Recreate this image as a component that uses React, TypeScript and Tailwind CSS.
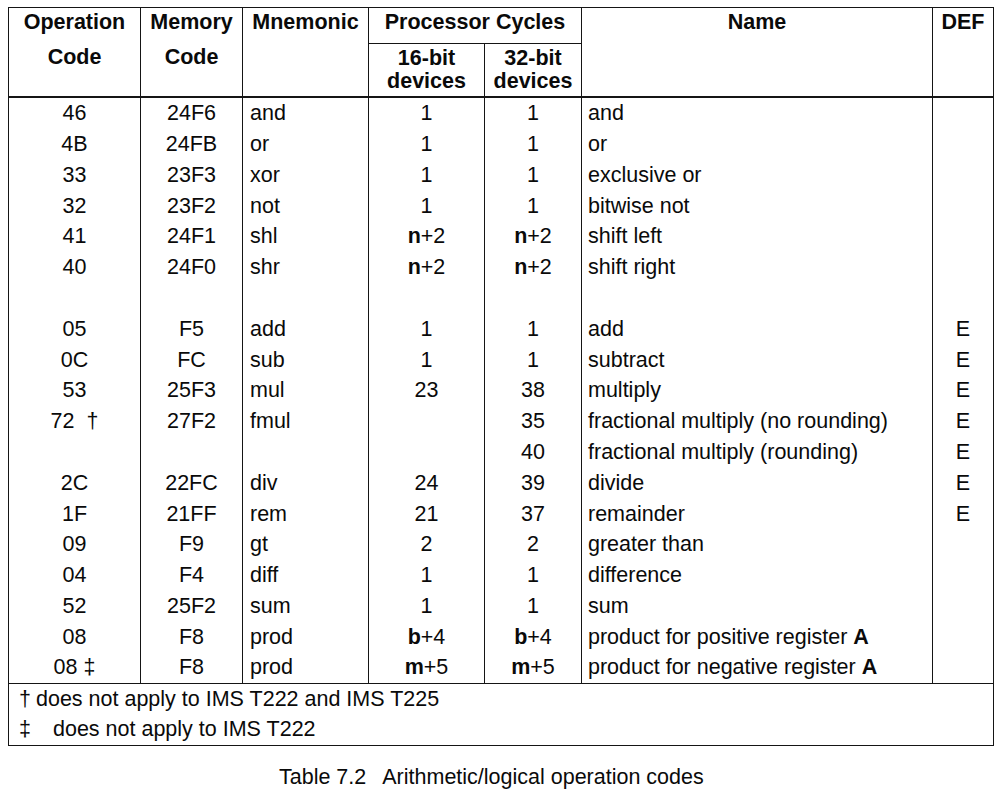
import React from "react";

type Cell = React.ReactNode;

const b = (l: string, rest: string) => (
  <span>
    <b className="font-bold">{l}</b>
    {rest}
  </span>
);

const rows: Cell[][] = [
  ["46", "24F6", "and", "1", "1", "and", ""],
  ["4B", "24FB", "or", "1", "1", "or", ""],
  ["33", "23F3", "xor", "1", "1", "exclusive or", ""],
  ["32", "23F2", "not", "1", "1", "bitwise not", ""],
  ["41", "24F1", "shl", b("n", "+2"), b("n", "+2"), "shift left", ""],
  ["40", "24F0", "shr", b("n", "+2"), b("n", "+2"), "shift right", ""],
  ["", "", "", "", "", "", ""],
  ["05", "F5", "add", "1", "1", "add", "E"],
  ["0C", "FC", "sub", "1", "1", "subtract", "E"],
  ["53", "25F3", "mul", "23", "38", "multiply", "E"],
  ["72\u00a0\u00a0\u2020", "27F2", "fmul", "", "35", "fractional multiply (no rounding)", "E"],
  ["", "", "", "", "40", "fractional multiply (rounding)", "E"],
  ["2C", "22FC", "div", "24", "39", "divide", "E"],
  ["1F", "21FF", "rem", "21", "37", "remainder", "E"],
  ["09", "F9", "gt", "2", "2", "greater than", ""],
  ["04", "F4", "diff", "1", "1", "difference", ""],
  ["52", "25F2", "sum", "1", "1", "sum", ""],
  ["08", "F8", "prod", b("b", "+4"), b("b", "+4"), (
    <span>
      product for positive register <b className="font-bold">A</b>
    </span>
  ), ""],
  ["08 \u2021", "F8", "prod", b("m", "+5"), b("m", "+5"), (
    <span>
      product for negative register <b className="font-bold">A</b>
    </span>
  ), ""],
];

const align = [
  "justify-center",
  "justify-center",
  "justify-start pl-[7px]",
  "justify-center",
  "justify-center",
  "justify-start pl-[6px]",
  "justify-center",
];

export default function App() {
  return (
    <div
      className="w-[1000px] h-[802px] bg-white text-[#0a0a0a] text-[21.5px] overflow-hidden"
      style={{ fontFamily: '"Liberation Sans", Arial, sans-serif' }}
    >
      <div className="pt-[7px] pl-[8px]">
        <div className="w-[986px] border border-[#151515]">
          {/* header */}
          <div className="grid grid-cols-[132px_102px_126px_116px_97px_351px_60px] grid-rows-[36px_52px] border-b-2 border-[#151515] font-bold">
            <div className="row-span-2 border-r border-[#151515] text-center">
              <div className="leading-[28px]">Operation</div>
              <div className="leading-[28px] mt-[7px]">Code</div>
            </div>
            <div className="row-span-2 border-r border-[#151515] text-center">
              <div className="leading-[28px]">Memory</div>
              <div className="leading-[28px] mt-[7px]">Code</div>
            </div>
            <div className="row-span-2 border-r border-[#151515] text-center">
              <div className="leading-[28px]">Mnemonic</div>
            </div>
            <div className="col-span-2 border-r border-b border-[#151515] text-center leading-[28px]">
              Processor Cycles
            </div>
            <div className="row-span-2 border-r border-[#151515] text-center leading-[28px]">Name</div>
            <div className="row-span-2 text-center leading-[28px]">DEF</div>
            <div className="border-r border-[#151515] text-center pt-[3px] leading-[23px]">
              16-bit
              <br />
              devices
            </div>
            <div className="border-r border-[#151515] text-center pt-[3px] leading-[23px]">
              32-bit
              <br />
              devices
            </div>
          </div>
          {/* body */}
          <div className="grid grid-cols-[132px_102px_126px_116px_97px_351px_60px] grid-rows-[repeat(19,minmax(0,1fr))] h-[585px] overflow-hidden">
            {rows.map((r, i) =>
              r.map((c, j) => (
                <div
                  key={`${i}-${j}`}
                  className={`flex items-center whitespace-pre ${align[j]} ${
                    j < 6 ? "border-r border-[#151515]" : ""
                  }`}
                >
                  {c}
                </div>
              ))
            )}
          </div>
          {/* footnotes */}
          <div className="border-t border-[#151515] pl-[10px]">
            <div className="h-[30.5px] flex items-center pb-[1px]">
              <span className="w-[17px]">{"\u2020"}</span>
              <span>does not apply to IMS T222 and IMS T225</span>
            </div>
            <div className="h-[30.5px] flex items-center pb-[1px]">
              <span className="w-[34px]">{"\u2021"}</span>
              <span>does not apply to IMS T222</span>
            </div>
          </div>
        </div>
      </div>
      <div className="pl-[279px] mt-[19px] leading-[24px]">
        <span>Table 7.2</span>
        <span className="ml-[16px]">Arithmetic/logical operation codes</span>
      </div>
    </div>
  );
}
